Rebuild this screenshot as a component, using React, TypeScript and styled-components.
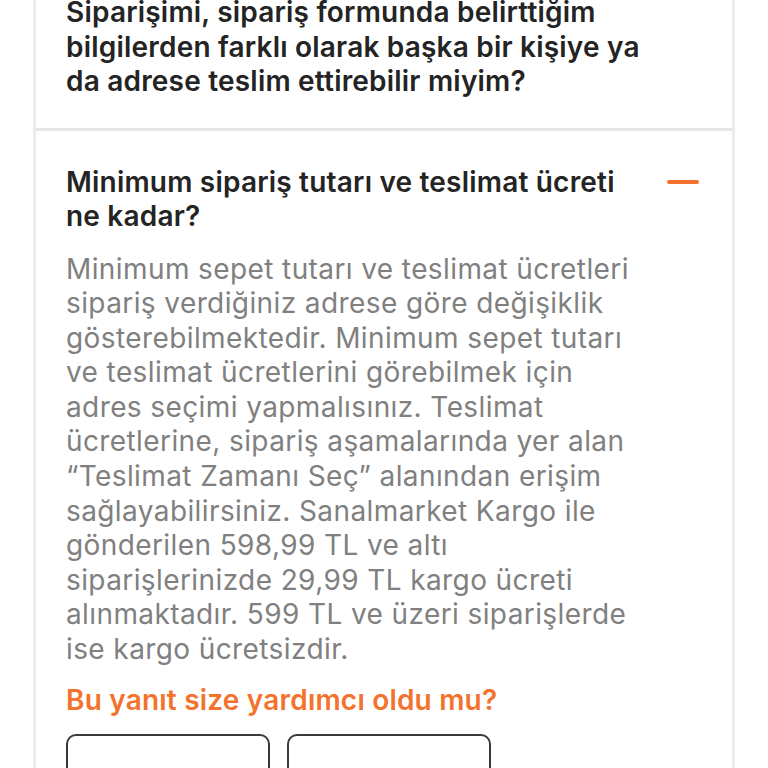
import React, { useState } from 'react'
import styled, { createGlobalStyle } from 'styled-components'

interface iFaqItem {
  id: number
  question: string
  answer?: string
}

const items: iFaqItem[] = [
  {
    id: 1,
    question:
      'Siparişimi, sipariş formunda belirttiğim bilgilerden farklı olarak başka bir kişiye ya da adrese teslim ettirebilir miyim?'
  },
  {
    id: 2,
    question: 'Minimum sipariş tutarı ve teslimat ücreti ne kadar?',
    answer:
      'Minimum sepet tutarı ve teslimat ücretleri sipariş verdiğiniz adrese göre değişiklik gösterebilmektedir. Minimum sepet tutarı ve teslimat ücretlerini görebilmek için adres seçimi yapmalısınız. Teslimat ücretlerine, sipariş aşamalarında yer alan “Teslimat Zamanı Seç” alanından erişim sağlayabilirsiniz. Sanalmarket Kargo ile gönderilen 598,99 TL ve altı siparişlerinizde 29,99 TL kargo ücreti alınmaktadır. 599 TL ve üzeri siparişlerde ise kargo ücretsizdir.'
  }
]

const GlobalStyle = createGlobalStyle`
  html, body {
    margin: 0;
    padding: 0;
    background: #ffffff;
    overflow: hidden;
  }
  body {
    font-family: Inter, 'Noto Sans', sans-serif;
    -webkit-font-smoothing: antialiased;
  }
`

const App: React.FC = () => {
  const [openId, setOpenId] = useState<number>(2)

  return (
    <>
      <GlobalStyle />
      <Page>
        <FaqList>
          {items.map((item) => {
            const isOpen = item.id === openId
            return (
              <FaqCard key={item.id}>
                <QuestionRow onClick={() => setOpenId(isOpen ? 0 : item.id)}>
                  <Question>{item.question}</Question>
                  <IconSlot>{isOpen && <Minus />}</IconSlot>
                </QuestionRow>
                {isOpen && item.answer && (
                  <>
                    <Answer>{item.answer}</Answer>
                    <Feedback>Bu yanıt size yardımcı oldu mu?</Feedback>
                    <FeedbackButtons>
                      <FeedbackButton />
                      <FeedbackButton />
                    </FeedbackButtons>
                  </>
                )}
              </FaqCard>
            )
          })}
        </FaqList>
      </Page>
    </>
  )
}

export default App

const Page = styled.div`
  width: 768px;
  height: 768px;
  overflow: hidden;
`
const FaqList = styled.div`
  margin: -5px 33px 0;
  border-left: 3px solid #ebebeb;
  border-right: 3px solid #ebebeb;
`
const FaqCard = styled.div`
  padding: 0 33px 29px 30px;
  border-bottom: 3px solid #e6e6e6;

  & + & {
    padding-top: 34px;
  }
`
const QuestionRow = styled.div`
  display: flex;
  align-items: flex-start;
  gap: 16px;
  cursor: pointer;
`
const Question = styled.div`
  flex: 1;
  font-weight: 600;
  font-size: 28px;
  line-height: 34.5px;
  color: #242424;
  letter-spacing: 0.2px;
`
const IconSlot = styled.div`
  flex: none;
  width: 32px;
  height: 34px;
  display: flex;
  align-items: center;
`
const Minus = styled.span`
  width: 32px;
  height: 4px;
  border-radius: 2px;
  background: #f3722c;
`
const Answer = styled.p`
  margin: 18px 56px 0 0;
  font-size: 28px;
  line-height: 34.6px;
  font-weight: 400;
  color: #808080;
  letter-spacing: 0.4px;
`
const Feedback = styled.div`
  margin-top: 16px;
  font-size: 28px;
  line-height: 34px;
  font-weight: 600;
  color: #f3722c;
  letter-spacing: 0.2px;
`
const FeedbackButtons = styled.div`
  display: flex;
  gap: 17px;
  margin-top: 17px;
`
const FeedbackButton = styled.button`
  width: 204px;
  height: 60px;
  background: #ffffff;
  border: 2px solid #3a3a3a;
  border-radius: 10px;
  cursor: pointer;
`
